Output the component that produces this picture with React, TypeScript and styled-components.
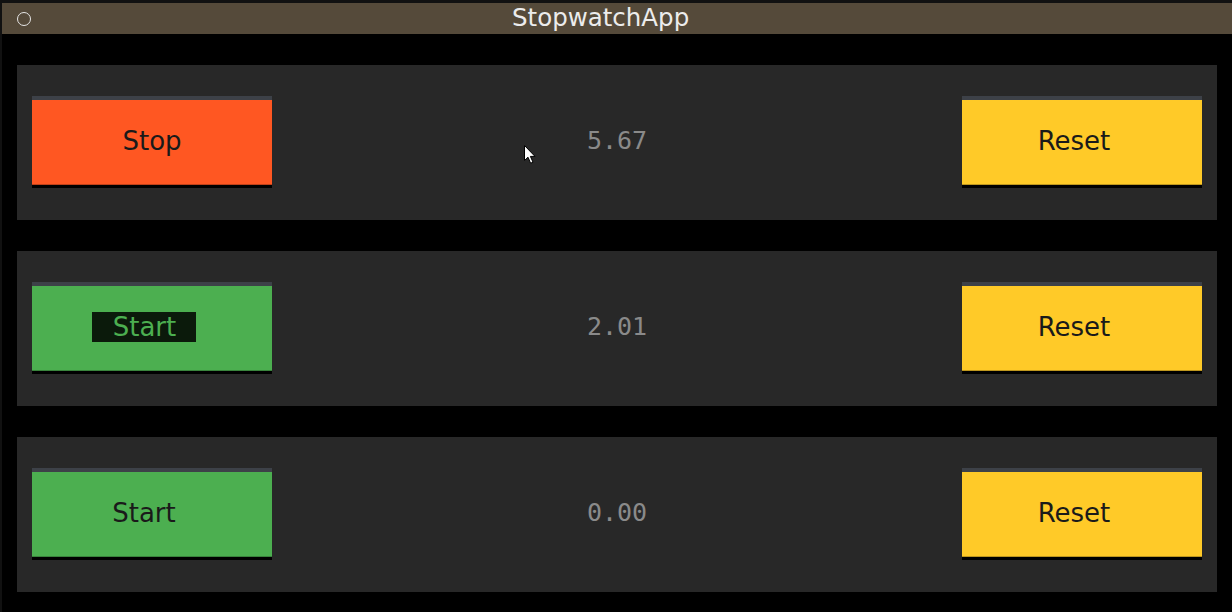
import React from "react";
import styled, { createGlobalStyle } from "styled-components";

const Global = createGlobalStyle`
  html, body { margin: 0; padding: 0; background: #000; }
  body { font-family: "DejaVu Sans", sans-serif; }
`;

const Frame = styled.div`
  position: relative;
  width: 1232px;
  height: 612px;
  box-sizing: border-box;
  border-top: 3px solid #111;
  border-left: 2px solid #111;
  background: #000;
  display: flex;
  flex-direction: column;
  overflow: hidden;
`;

const TitleBar = styled.div`
  height: 31px;
  background: #554a3a;
  display: flex;
  align-items: center;
  position: relative;
`;

const WindowDot = styled.div`
  width: 12px;
  height: 12px;
  border: 1.5px solid #e6e6e6;
  border-radius: 50%;
  margin-left: 15px;
`;

const Title = styled.div`
  position: absolute;
  left: 510px;
  top: 0;
  height: 31px;
  line-height: 30px;
  font-family: "Comic Sans MS", "DejaVu Sans", sans-serif;
  font-size: 24.5px;
  color: #ececec;
`;

const Body = styled.div`
  display: flex;
  flex-direction: column;
  gap: 31px;
  padding: 31px 0 0 15px;
`;

const Panel = styled.div`
  width: 1200px;
  height: 155px;
  box-sizing: border-box;
  background: #282828;
  padding: 31px 15px 0;
  display: flex;
  justify-content: space-between;
  align-items: flex-start;
`;

const Button = styled.div<{ $bg: string; $shift?: boolean }>`
  width: 240px;
  height: 92px;
  box-sizing: border-box;
  padding-bottom: 4px;
  padding-right: ${(p) => (p.$shift ? "16px" : "0")};
  border-top: 4px solid #3d4148;
  border-bottom: 3px solid #000;
  background: ${(p) => p.$bg};
  box-shadow: inset 0 -1px 0 rgba(0, 0, 0, 0.25);
  display: flex;
  align-items: center;
  justify-content: center;
  font-family: "Comic Sans MS", "DejaVu Sans", sans-serif;
  font-size: 26px;
  color: #1a1a1a;
`;

const Selected = styled.span`
  background: #0b1a0b;
  color: #4caf50;
  padding: 0 20px 0 21px;
  line-height: 30px;
  display: inline-block;
`;

const Time = styled.div`
  align-self: flex-start;
  margin-top: 30px;
  font-family: "DejaVu Sans Mono", monospace;
  font-size: 25px;
  color: #8a8a8a;
`;

const Cursor = styled.svg`
  position: absolute;
  left: 521px;
  top: 141px;
`;

const rows = [
  { label: "Stop", bg: "#ff5722", time: "5.67", selected: false, shift: false },
  { label: "Start", bg: "#4caf50", time: "2.01", selected: true, shift: true },
  { label: "Start", bg: "#4caf50", time: "0.00", selected: false, shift: true },
];

export default function App() {
  return (
    <>
      <Global />
      <Frame>
        <TitleBar>
          <WindowDot />
          <Title>StopwatchApp</Title>
        </TitleBar>
        <Body>
          {rows.map((r, i) => (
            <Panel key={i}>
              <Button $bg={r.bg} $shift={r.shift}>
                {r.selected ? <Selected>{r.label}</Selected> : r.label}
              </Button>
              <Time>{r.time}</Time>
              <Button $bg="#ffca28" $shift>
                Reset
              </Button>
            </Panel>
          ))}
        </Body>
        <Cursor width="14" height="21" viewBox="0 0 14 21">
          <path
            d="M1.5 1.5 L1.5 16.5 L5 13.2 L7.6 19.2 L10 18.2 L7.4 12.4 L12 12.4 Z"
            fill="#fff"
            stroke="#000"
            strokeWidth="1"
            strokeLinejoin="round"
          />
        </Cursor>
      </Frame>
    </>
  );
}
